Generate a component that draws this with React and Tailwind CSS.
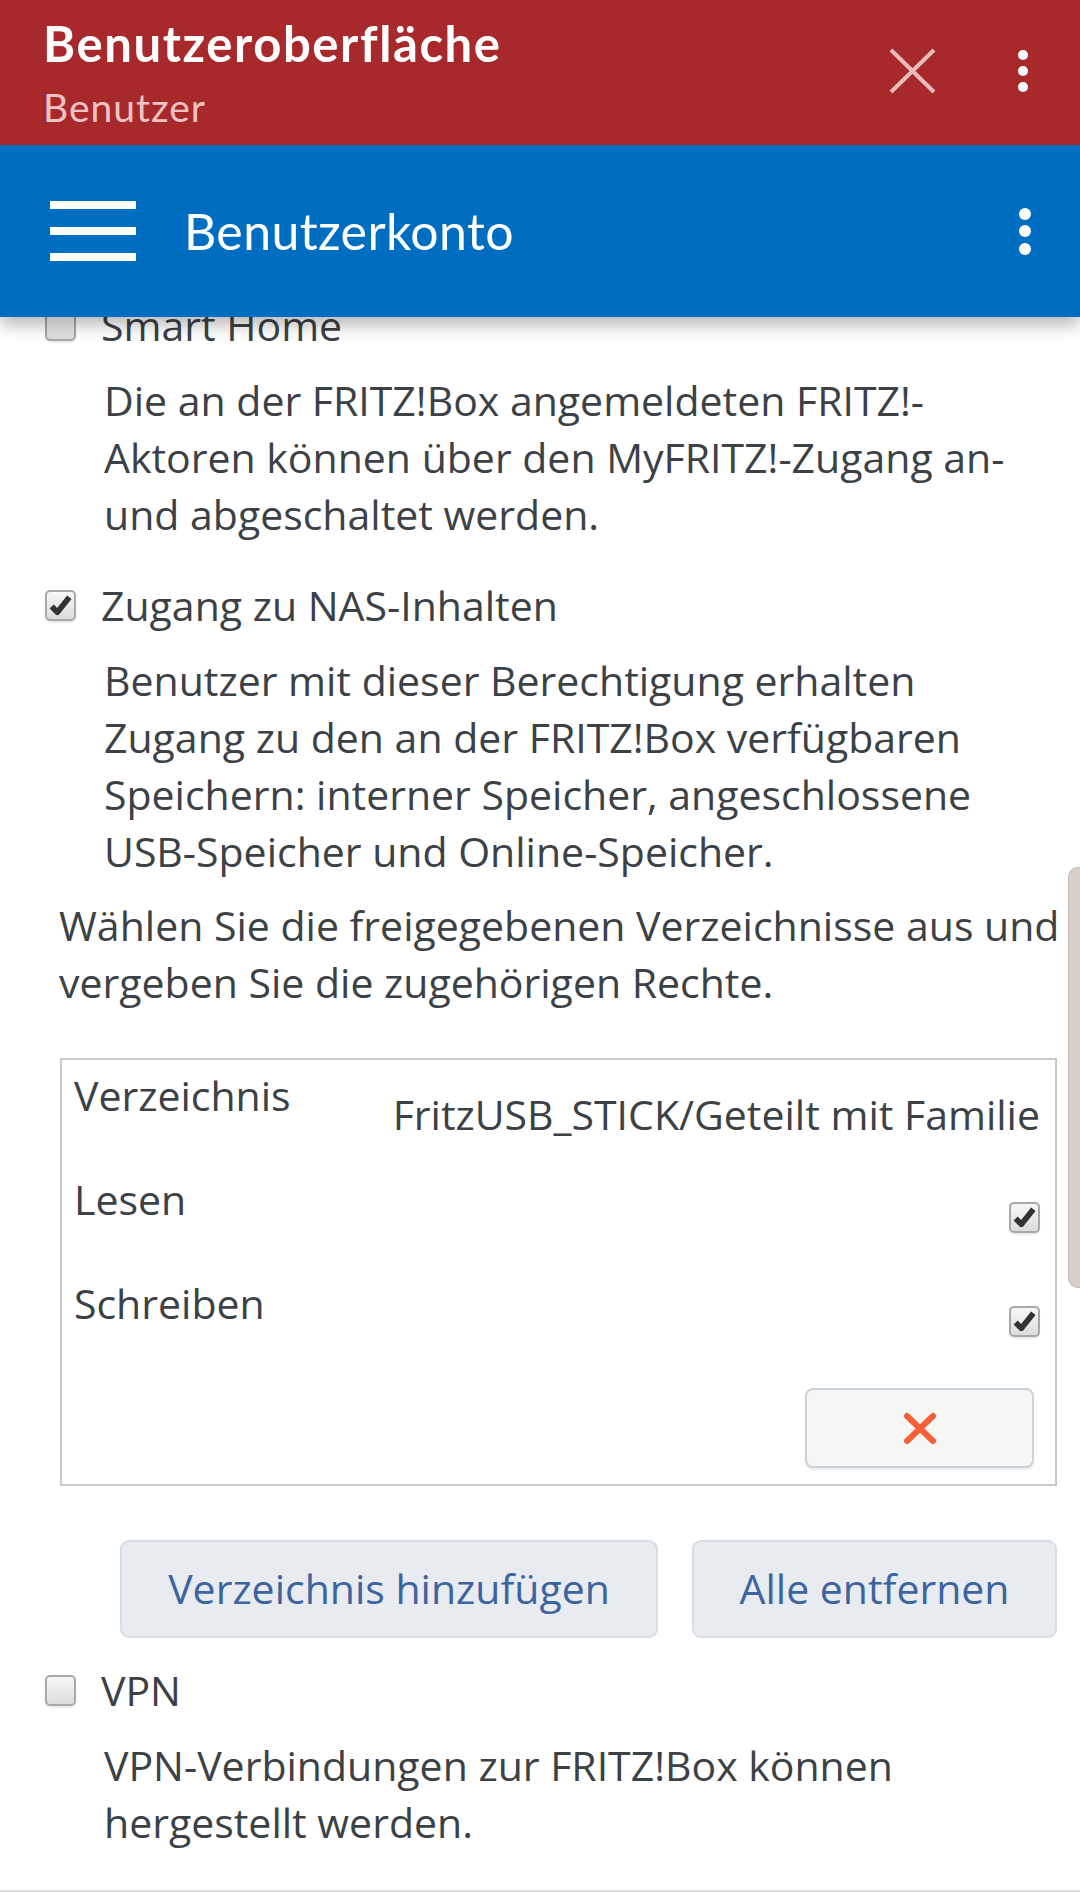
import React from 'react';

const Checkbox = ({ checked, className = '' }) => (
  <span
    className={`flex h-[31px] w-[31px] shrink-0 items-center justify-center rounded-[5px] border-2 border-[#a8a8a8] bg-gradient-to-b from-[#f8f8f8] to-[#dcdcdc] shadow-[0_2px_1px_rgba(0,0,0,0.08)] ${className}`}
  >
    {checked && (
      <svg width="25" height="25" viewBox="0 0 24 24">
        <path d="M3.5 13 L9 18.5 L20.5 4" fill="none" stroke="#333" strokeWidth="5.5" strokeLinejoin="round" />
      </svg>
    )}
  </span>
);

const Option = ({ label, checked, lines, className = '' }) => (
  <div className={className}>
    <div className="flex items-end">
      <Checkbox checked={checked} className="mb-[13px]" />
      <span className="ml-[25px] leading-[57px]">{label}</span>
    </div>
    <p className="mt-[18px] whitespace-nowrap pl-[59px] leading-[57px]">
      {lines.map((l, i) => (
        <span key={i} className="block">
          {l}
        </span>
      ))}
    </p>
  </div>
);

const Dots = ({ size, gap }) => (
  <div className={`flex flex-col ${gap}`}>
    {[0, 1, 2].map((i) => (
      <span key={i} className={`block rounded-full bg-white ${size}`} />
    ))}
  </div>
);

const rows = [
  { label: 'Verzeichnis', value: 'FritzUSB_STICK/Geteilt mit Familie' },
  { label: 'Lesen', checked: true },
  { label: 'Schreiben', checked: true },
];

export default function App() {
  return (
    <div className="relative h-[1892px] w-[1080px] overflow-hidden bg-white font-['Open_Sans',sans-serif] text-[41px] text-[#3c4146]">
      <header className="relative z-10 shadow-[0_8px_16px_rgba(0,0,0,0.28)]">
        <div className="flex h-[145px] items-start bg-[#a8292b] pl-[43px] pr-[52px] font-['Lato',sans-serif]">
          <div className="pt-[19px]">
            <div className="text-[49px] font-bold leading-none tracking-[1.6px] text-white">Benutzeroberfläche</div>
            <div className="mt-[20px] text-[39px] leading-none tracking-[1px] text-[#efc3c3]">Benutzer</div>
          </div>
          <svg className="ml-auto mt-[48px]" width="47" height="46" viewBox="0 0 47 46">
            <path d="M2 2 L45 44 M45 2 L2 44" stroke="#ecbcbc" strokeWidth="4" />
          </svg>
          <div className="ml-[82px] mt-[50px]">
            <Dots size="h-[10px] w-[10px]" gap="gap-[6px]" />
          </div>
        </div>
        <div className="flex h-[172px] items-center bg-[#006ec0] pl-[50px] pr-[49px] font-['Lato',sans-serif]">
          <div className="flex w-[86px] flex-col gap-[17.5px]">
            <span className="block h-[8.5px] bg-white" />
            <span className="block h-[8.5px] bg-white" />
            <span className="block h-[8.5px] bg-white" />
          </div>
          <span className="ml-[48px] text-[50px] leading-none tracking-[0.4px] text-white">Benutzerkonto</span>
          <div className="ml-auto">
            <Dots size="h-[12px] w-[12px]" gap="gap-[5.5px]" />
          </div>
        </div>
      </header>

      <main className="-mt-[20px] pl-[45px] pr-[23px]">
        <Option
          label="Smart Home"
          lines={[
            'Die an der FRITZ!Box angemeldeten FRITZ!-',
            'Aktoren können über den MyFRITZ!-Zugang an-',
            'und abgeschaltet werden.',
          ]}
        />
        <Option
          className="mt-[34px]"
          label="Zugang zu NAS-Inhalten"
          checked
          lines={[
            'Benutzer mit dieser Berechtigung erhalten',
            'Zugang zu den an der FRITZ!Box verfügbaren',
            'Speichern: interner Speicher, angeschlossene',
            'USB-Speicher und Online-Speicher.',
          ]}
        />

        <p className="mt-[17px] whitespace-nowrap pl-[14px] leading-[57px]">
          <span className="block">Wählen Sie die freigegebenen Verzeichnisse aus und</span>
          <span className="block">vergeben Sie die zugehörigen Rechte.</span>
        </p>

        <div className="ml-[15px] mt-[47px] border-2 border-[#cacac2] pb-[16px] pl-[12px] pr-[15px] pt-[7px]">
          {rows.map((r) => (
            <div key={r.label} className="flex h-[104px] justify-between">
              <span className="leading-[57px]">{r.label}</span>
              {r.value ? (
                <span className="pt-[19px] leading-[57px]">{r.value}</span>
              ) : (
                <Checkbox checked={r.checked} className="mt-[31px]" />
              )}
            </div>
          ))}
          <div className="mt-[9px] flex justify-end">
            <button className="mr-[6px] flex h-[80px] w-[229px] items-center justify-center rounded-[8px] border-2 border-[#c8d3db] bg-[#f6f6f4] shadow-[0_2px_2px_rgba(0,0,0,0.08)]">
              <svg width="34" height="33" viewBox="0 0 34 33">
                <path d="M4 4 L30 29 M30 4 L4 29" stroke="#f5603a" strokeWidth="6" strokeLinecap="round" />
              </svg>
            </button>
          </div>
        </div>

        <div className="mt-[54px] flex justify-end gap-[34px]">
          <button className="h-[98px] w-[538px] rounded-[9px] border-2 border-[#d6dde3] bg-[#e8ecf0] text-[#3d64a0]">
            Verzeichnis hinzufügen
          </button>
          <button className="h-[98px] w-[365px] rounded-[9px] border-2 border-[#d6dde3] bg-[#e8ecf0] text-[#3d64a0]">
            Alle entfernen
          </button>
        </div>

        <Option
          className="mt-[24px]"
          label="VPN"
          lines={['VPN-Verbindungen zur FRITZ!Box können', 'hergestellt werden.']}
        />
      </main>

      <div className="mt-[39px] h-[4px] bg-[#dcdcdc]" />

      <div className="absolute right-0 top-[867px] h-[421px] w-[12px] rounded-l-[10px] border border-r-0 border-[#c2b9b5] bg-[#d8cfcb]" />
    </div>
  );
}
